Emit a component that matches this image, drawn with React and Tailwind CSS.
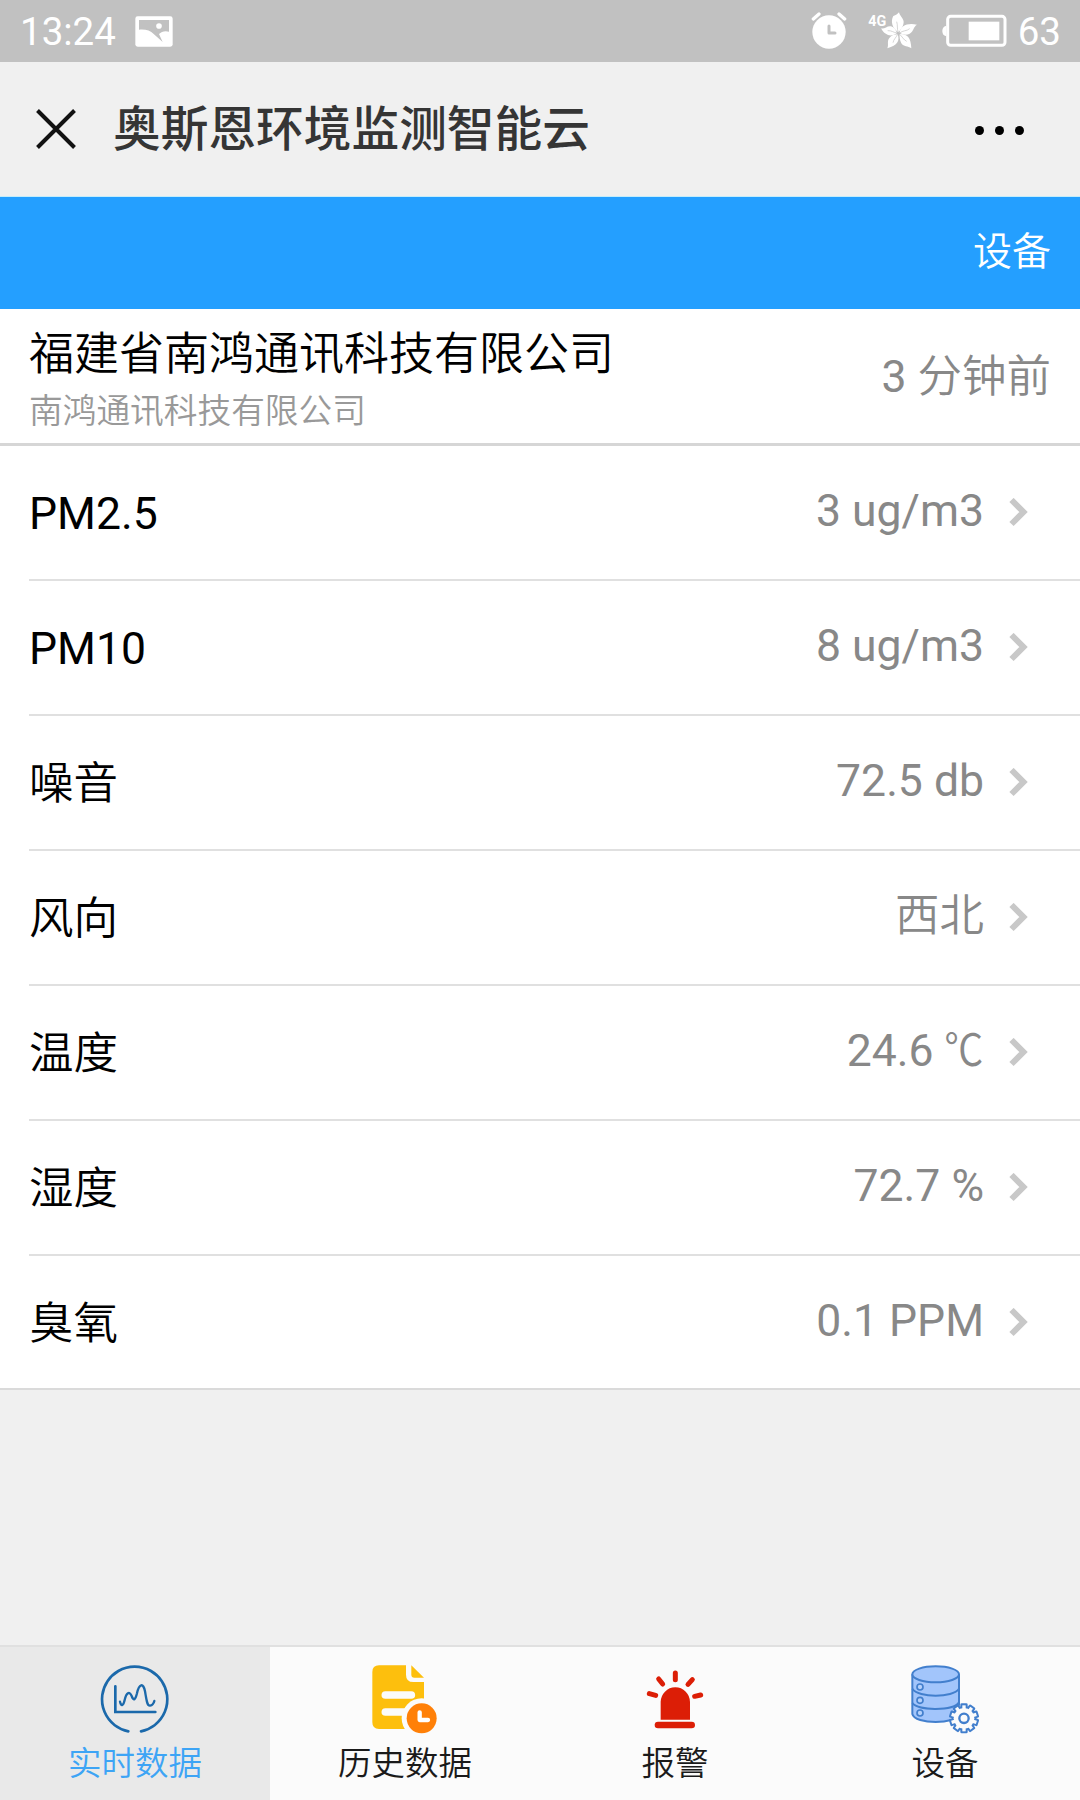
import React, { useState } from 'react';

const readings = [
  { label: 'PM2.5', value: '3 ug/m3', latin: true },
  { label: 'PM10', value: '8 ug/m3', latin: true },
  { label: '噪音', value: '72.5 db' },
  { label: '风向', value: '西北', cjkValue: true },
  { label: '温度', value: '24.6', unit: '℃' },
  { label: '湿度', value: '72.7 %' },
  { label: '臭氧', value: '0.1 PPM' },
];

function StatusBar() {
  return (
    <div className="flex items-center h-[62px] bg-[#c1c1c1] text-white pl-[20px] pr-[19px]">
      <span className="text-[38.5px] leading-[62px] mt-[2px]">13:24</span>

      {/* picture notification */}
      <svg className="ml-[19px] w-[38px] h-[31px]" viewBox="0 0 114 93">
        <rect x="1" y="1" width="112" height="91" rx="7" fill="#fff" />
        <path d="M12 12H102V47C90 43 79 47 72 54L83 78L56 54C46 43 30 39 12 41Z" fill="#c1c1c1" />
        <circle cx="72" cy="30" r="8.5" fill="#fff" />
      </svg>

      <div className="flex items-center ml-auto">
        {/* alarm */}
        <svg className="w-[36px] h-[38px]" viewBox="94 38 108 114">
          <circle cx="148" cy="98" r="50" fill="#fff" />
          <path d="M101 59L118 44M195 59L178 44" stroke="#fff" strokeWidth="10" strokeLinecap="round" />
          <path d="M148 80V101H166" fill="none" stroke="#c1c1c1" strokeWidth="9" strokeLinecap="round" strokeLinejoin="round" />
        </svg>

        {/* 4G + carrier flower */}
        <svg className="ml-[20px] w-[52px] h-[38px]" viewBox="263 36 156 114">
          <text x="267" y="79" fontSize="46" fontWeight="700" fill="#fff" textLength="54" lengthAdjust="spacingAndGlyphs">4G</text>
          <g fill="#fff">
            <path d="M357 97C338 84 333 64 342 48C350 46 354 42 359 37C361 47 372 55 373 65C373 78 365 88 357 97Z" />
            <path d="M361 98C363 77 384 68 413 74C402 80 403 94 391 101C380 107 369 103 361 98Z" />
            <path d="M361 102C382 101 395 111 396 145C386 138 373 141 366 130C361 120 360 110 361 102Z" />
            <path d="M355 103C362 122 355 136 324 145C329 134 322 124 330 114C336 106 346 103 355 103Z" />
            <path d="M353 99C338 111 318 109 305 85C316 88 323 77 335 79C345 82 350 91 353 99Z" />
          </g>
          <g fill="none" stroke="#c1c1c1" strokeWidth="2">
            <path d="M357 97C352 86 356 76 352 65M361 99C370 91 382 94 391 86M360 102C369 110 372 119 382 124M355 103C350 113 343 118 341 128M353 99C343 98 337 91 325 92" />
          </g>
        </svg>

        {/* battery */}
        <svg className="ml-[23px] w-[66px] h-[34px]" viewBox="486 42 198 102">
          <rect x="503" y="49" width="172" height="87" rx="9" fill="none" stroke="#fff" strokeWidth="9" />
          <path d="M499 77C490 79 487 85 487 93C487 101 490 107 499 109Z" fill="#fff" />
          <rect x="566" y="65" width="92" height="56" fill="#fff" />
        </svg>
        <span className="ml-[10px] mt-[2px] text-[38.5px] leading-[62px]">63</span>
      </div>
    </div>
  );
}

function TitleBar() {
  return (
    <header className="flex items-center h-[134px] bg-[#f0f0f0] pl-[36px] pr-[56px]">
      <svg className="w-[40px] h-[40px]" viewBox="0 0 40 40">
        <path d="M1.5 1.5L38.5 38.5M38.5 1.5L1.5 38.5" stroke="#111" strokeWidth="4" />
      </svg>
      <h1 className="ml-[37px] mt-[2px] text-[47.7px] leading-[60px] font-medium text-[#353535]">
        奥斯恩环境监测智能云
      </h1>
      <div className="flex gap-[11px] ml-auto mt-[3px]">
        <i className="w-[9px] h-[9px] rounded-full bg-black" />
        <i className="w-[9px] h-[9px] rounded-full bg-black" />
        <i className="w-[9px] h-[9px] rounded-full bg-black" />
      </div>
    </header>
  );
}

function Row({ label, value, unit, latin, cjkValue, last }) {
  return (
    <li className={last ? 'pl-[29px] border-b-2 border-[#dadada]' : 'pl-[29px]'}>
      <div className={`flex items-center pr-[52px] ${last ? 'h-[132px]' : 'h-[135px] border-b-2 border-[#e0e0e0]'}`}>
        <span className={`mt-[3px] text-[44.5px] leading-[60px] text-black ${latin ? 'font-normal' : 'font-[350]'}`}>
          {label}
        </span>
        <span className={`ml-auto -mt-[3px] text-[44.5px] leading-[60px] text-[#888] ${cjkValue ? 'font-[350]' : 'font-normal'}`}>
          {value}
          {unit && <span className="inline-block ml-[6px] origin-right scale-x-[0.88] font-[350]">{unit}</span>}
        </span>
        <svg className="ml-[25px] w-[19px] h-[29px]" viewBox="0 0 19 29">
          <path d="M2.5 2L14.5 14L2.5 26" fill="none" stroke="#c8c8c8" strokeWidth="6" />
        </svg>
      </div>
    </li>
  );
}

// all four tab icons share a 216 unit box
function RealtimeIcon() {
  return (
    <svg className="w-[72px] h-[72px]" viewBox="117 67 216 216" fill="none" stroke="#1b69ab" strokeLinecap="round">
      <path d="M205 272A98 98 0 1 1 243 272" strokeWidth="8" />
      <path d="M166 137V214H286" strokeWidth="8" />
      <path d="M180 183C184 199 190 195 194 178C199 156 208 150 215 166C221 182 226 178 231 158C237 129 250 125 255 152C260 180 261 196 270 195C277 194 281 189 283 181" strokeWidth="7" />
    </svg>
  );
}

function HistoryIcon() {
  return (
    <svg className="w-[72px] h-[72px]" viewBox="147 67 216 216">
      <path d="M177 74H258V102Q258 124 280 124H312V245Q312 265 292 265H177Q157 265 157 245V94Q157 74 177 74Z" fill="#fdbf0d" />
      <path d="M274 74L312 111H283Q274 111 274 102Z" fill="#fdbf0d" />
      <path d="M196 163H274M196 214H256" stroke="#fbfbfb" strokeWidth="23" strokeLinecap="round" />
      <circle cx="305" cy="233" r="60" fill="#fbfbfb" />
      <circle cx="305" cy="233" r="45" fill="#ff8008" />
      <path d="M299 215V238H324" fill="none" stroke="#fff" strokeWidth="13" strokeLinecap="round" strokeLinejoin="round" />
    </svg>
  );
}

function AlarmIcon() {
  return (
    <svg className="w-[72px] h-[72px]" viewBox="117 67 216 216">
      <path d="M182 237V184A44 44 0 0 1 270 184V237Z" fill="#dc1e06" />
      <rect x="164" y="243" width="121" height="20" rx="10" fill="#dc1e06" />
      <path d="M226 97V117M176 115L188 130M277 117L264 131M148 159L167 164M284 167L302 163" stroke="#dc1e06" strokeWidth="15" strokeLinecap="round" />
    </svg>
  );
}

function DeviceIcon() {
  const teeth = [0, 36, 72, 108, 144, 180, 216, 252, 288, 324];
  return (
    <svg className="w-[72px] h-[72px]" viewBox="117 67 216 216">
      <g stroke="#427fcd" strokeWidth="6">
        <path d="M127 101V220C134 252 260 252 267 220V101" fill="#a2c5fb" />
        <ellipse cx="197" cy="101" rx="70" ry="24" fill="#a2c5fb" />
        <path d="M127 144C145 172 249 172 267 144M127 187C145 211 249 211 267 185" fill="none" />
        <g fill="#b5d1fb" strokeWidth="5">
          <circle cx="150" cy="139" r="9" />
          <circle cx="150" cy="179" r="9" />
          <circle cx="150" cy="217" r="9" />
        </g>
      </g>
      <circle cx="282" cy="233" r="40" fill="#fbfbfb" />
      <g fill="#427fcd">
        {teeth.map((deg) => (
          <rect key={deg} x="271" y="188" width="22" height="20" rx="4" transform={`rotate(${deg} 282 233)`} />
        ))}
        <circle cx="282" cy="233" r="37" />
      </g>
      <g fill="#fbfbfb">
        {teeth.map((deg) => (
          <rect key={deg} x="277" y="194" width="10" height="20" transform={`rotate(${deg} 282 233)`} />
        ))}
        <circle cx="282" cy="233" r="31" />
      </g>
      <circle cx="282" cy="233" r="14" fill="none" stroke="#427fcd" strokeWidth="7" />
    </svg>
  );
}

const tabs = [
  { name: '实时数据', Icon: RealtimeIcon },
  { name: '历史数据', Icon: HistoryIcon },
  { name: '报警', Icon: AlarmIcon },
  { name: '设备', Icon: DeviceIcon },
];

export default function App() {
  const [active, setActive] = useState(0);

  return (
    <div className="flex flex-col w-[1080px] h-[1800px] overflow-hidden bg-[#f0f0f0] font-[Roboto,'Noto_Sans_CJK_SC',sans-serif]">
      <StatusBar />
      <TitleBar />

      <div className="flex items-center justify-end h-[113px] pr-[29px] border-t border-[#c4edfb] bg-[#249fff]">
        <button className="-mt-[3px] text-[39px] leading-[50px] font-[350] text-white">设备</button>
      </div>

      {/* company */}
      <section className="flex items-center justify-between h-[137px] px-[29px] bg-white border-b-[3px] border-[#d6d6d6]">
        <div className="pt-[12px] font-[350]">
          <h2 className="text-[45px] leading-[60px] font-[350] text-black">福建省南鸿通讯科技有限公司</h2>
          <p className="text-[33.7px] leading-[54px] text-[#999]">南鸿通讯科技有限公司</p>
        </div>
        <span className="mt-[2px] text-[44.5px] leading-[60px] text-[#888]">
          3 <span className="font-[350]">分钟前</span>
        </span>
      </section>

      <ul className="bg-white">
        {readings.map((r, i) => (
          <Row key={r.label} {...r} last={i === readings.length - 1} />
        ))}
      </ul>

      <nav className="grid grid-cols-4 h-[155px] mt-auto bg-[#fbfbfb] border-t-2 border-[#e0e0e0]">
        {tabs.map(({ name, Icon }, i) => (
          <button
            key={name}
            onClick={() => setActive(i)}
            className={`flex flex-col items-center pt-[16px] font-[350] ${i === active ? 'bg-[#e9e9e9] text-[#3da4f5]' : 'text-[#1a1a1a]'}`}
          >
            <Icon />
            <span className="mt-[4px] text-[33.5px] leading-[50px]">{name}</span>
          </button>
        ))}
      </nav>
    </div>
  );
}
